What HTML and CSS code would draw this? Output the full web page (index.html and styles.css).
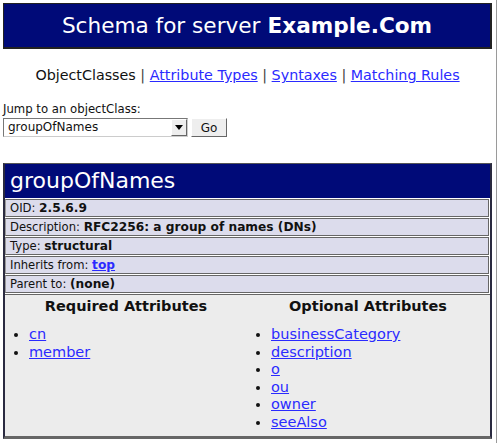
FILE: index.html
```html
<!DOCTYPE html>
<html>
<head>
<meta charset="utf-8">
<link rel="stylesheet" href="styles.css">
</head>
<body>
<div class="page">
  <div class="banner">Schema for server <b>Example.Com</b></div>
  <div class="nav">ObjectClasses <span class="sep">|</span> <a href="#">Attribute Types</a> <span class="sep">|</span> <a href="#">Syntaxes</a> <span class="sep">|</span> <a href="#">Matching Rules</a></div>
  <div class="jump">
    <div class="jump-label">Jump to an objectClass:</div>
    <div class="jump-row">
      <div class="select"><span class="sel-text">groupOfNames</span><span class="sel-btn"><svg width="8" height="5" viewBox="0 0 8 5"><path d="M0 0H8L4 5Z" fill="#000"/></svg></span></div>
      <div class="go">Go</div>
    </div>
  </div>
  <div class="oc">
    <div class="oc-title">groupOfNames</div>
    <div class="row">OID: <b>2.5.6.9</b></div>
    <div class="row">Description: <b>RFC2256: a group of names (DNs)</b></div>
    <div class="row">Type: <b>structural</b></div>
    <div class="row">Inherits from: <a class="blink" href="#">top</a></div>
    <div class="row">Parent to: <b>(none)</b></div>
    <div class="attrs">
      <div class="col">
        <div class="col-head">Required Attributes</div>
        <ul>
          <li><a href="#">cn</a></li>
          <li><a href="#">member</a></li>
        </ul>
      </div>
      <div class="col">
        <div class="col-head">Optional Attributes</div>
        <ul>
          <li><a href="#">businessCategory</a></li>
          <li><a href="#">description</a></li>
          <li><a href="#">o</a></li>
          <li><a href="#">ou</a></li>
          <li><a href="#">owner</a></li>
          <li><a href="#">seeAlso</a></li>
        </ul>
      </div>
    </div>
  </div>
</div>
</body>
</html>
```

FILE: styles.css
```css
html, body {
  margin: 0;
  padding: 0;
  background: #fff;
}
body {
  font-family: "DejaVu Sans", sans-serif;
  color: #111;
}
.page {
  width: 497px;
  height: 443px;
  border-right: 1px solid #9a9a9a;
  box-sizing: border-box;
  padding: 3px 0 0 3px;
}
.banner {
  width: 489px;
  height: 46px;
  box-sizing: border-box;
  background: #000a78;
  border: 1px solid #222;
  border-right-width: 2px;
  border-bottom-width: 2px;
  color: #fff;
  font-size: 21.6px;
  display: flex;
  align-items: center;
  justify-content: center;
}
.banner b { margin-left: 7px; }
.nav {
  width: 489px;
  text-align: center;
  font-size: 14.3px;
  margin-top: 15px;
  height: 22px;
  line-height: 22px;
}
.nav a { color: #2a2aff; }
.sep { color: #444; }
.jump { margin-top: 15px; }
.jump-label { font-size: 11.7px; height: 16px; line-height: 16px; }
.jump-row { display: flex; gap: 3px; margin-top: 1px; }
.select {
  width: 185px;
  height: 19px;
  box-sizing: border-box;
  border: 1px solid #777;
  border-right-color: #ccc;
  border-bottom-color: #ccc;
  display: flex;
  align-items: stretch;
  font-size: 12px;
}
.sel-text { flex: 1; padding-left: 4px; line-height: 17px; }
.sel-btn {
  width: 14px;
  background: #eee;
  border: 1px solid #fff;
  border-right-color: #666;
  border-bottom-color: #666;
  display: flex;
  align-items: center;
  justify-content: center;
}
.go {
  width: 36px;
  height: 19px;
  box-sizing: border-box;
  background: #eee;
  border: 1px solid #fff;
  border-right-color: #666;
  border-bottom-color: #666;
  font-size: 12px;
  display: flex;
  align-items: center;
  justify-content: center;
}
.oc {
  margin-top: 26px;
  width: 489px;
  box-sizing: border-box;
  border: 1px solid #555;
  border-left: 2px solid #2a2a40;
  border-right: 2px solid #2a2a40;
  border-bottom: 3px solid #666;
  background: #fff;
}
.oc-title {
  background: #000a78;
  color: #fff;
  font-size: 22px;
  height: 34px;
  line-height: 34px;
  padding-left: 5px;
  margin-bottom: 1px;
}
.row {
  background: #dcdcec;
  font-size: 11.6px;
  height: 16px;
  line-height: 16px;
  padding-left: 4px;
  border: 1px solid #666;
  border-left-color: #999;
  margin: 0 1px 1px 0;
}
.row b { font-size: 12.2px; }
.blink { color: #2a2aff; font-weight: bold; font-size: 12.2px; }
.attrs {
  background: #ececec;
  display: flex;
  height: 141px;
  border-top: 1px solid #666;
}
.col { width: 242px; }
.col-head {
  text-align: center;
  font-weight: bold;
  font-size: 14.5px;
  margin-top: 3px;
  height: 18px;
}
ul {
  margin: 10px 0 0 0;
  padding-left: 24px;
  font-size: 14.5px;
  line-height: 17.5px;
}
li a { color: #2a2aff; }
```
